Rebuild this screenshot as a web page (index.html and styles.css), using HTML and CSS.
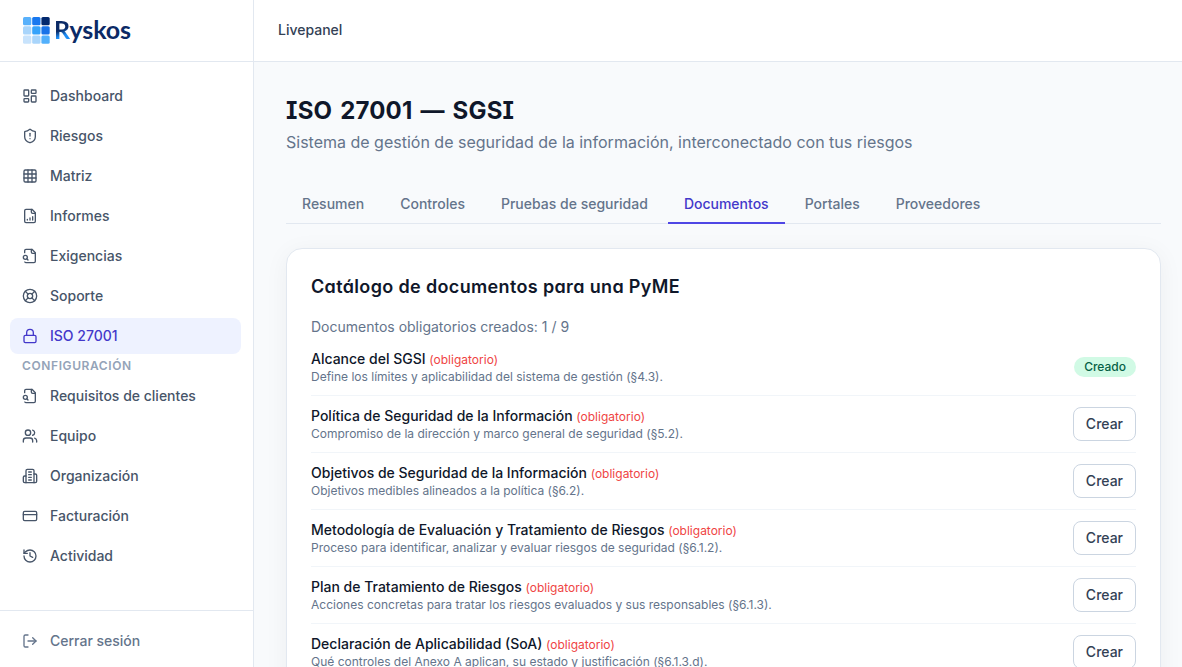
FILE: index.html
```
<!DOCTYPE html>
<html lang="es">
<head>
    <meta charset="UTF-8">
    <meta name="viewport" content="width=device-width, initial-scale=1.0">
    <title>Ryskos - ISO 27001</title>
    <link rel="stylesheet" href="styles.css">
</head>
<body>
    <div class="app">
        <aside class="sidebar">
            <a class="brand" href="#">
                <svg class="brand-mark" viewBox="0 0 27 27">
                    <rect x="0" y="0" width="8.3" height="8.3" rx="1.5" fill="#59b1fb"/>
                    <rect x="9.2" y="0" width="8.3" height="8.3" rx="1.5" fill="#1878ef"/>
                    <rect x="18.4" y="0" width="8.3" height="8.3" rx="1.5" fill="#03296e"/>
                    <rect x="0" y="9.2" width="8.3" height="8.3" rx="1.5" fill="#a9d5fb"/>
                    <rect x="9.2" y="9.2" width="8.3" height="8.3" rx="1.5" fill="#36a3fb"/>
                    <rect x="18.4" y="9.2" width="8.3" height="8.3" rx="1.5" fill="#1973e8"/>
                    <rect x="0" y="18.4" width="8.3" height="8.3" rx="1.5" fill="#c8e3fc"/>
                    <rect x="9.2" y="18.4" width="8.3" height="8.3" rx="1.5" fill="#a9d5fb"/>
                    <rect x="18.4" y="18.4" width="8.3" height="8.3" rx="1.5" fill="#52b0fc"/>
                </svg>
                <span class="brand-name"><span class="brand-initial">R</span>yskos</span>
            </a>

            <nav class="nav">
                <a class="nav-link" href="#">
                    <svg class="icon" viewBox="0 0 24 24"><rect x="3" y="3" width="7" height="9" rx="1"/><rect x="14" y="3" width="7" height="5" rx="1"/><rect x="14" y="12" width="7" height="9" rx="1"/><rect x="3" y="16" width="7" height="5" rx="1"/></svg>
                    Dashboard
                </a>
                <a class="nav-link" href="#">
                    <svg class="icon" viewBox="0 0 24 24"><path d="M20 13c0 5-3.5 7.5-7.66 8.95a1 1 0 0 1-.67-.01C7.5 20.5 4 18 4 13V6a1 1 0 0 1 1-1c2 0 4.5-1.2 6.24-2.72a1.17 1.17 0 0 1 1.52 0C14.51 3.81 17 5 19 5a1 1 0 0 1 1 1z"/><path d="M12 8v4"/><path d="M12 16h.01"/></svg>
                    Riesgos
                </a>
                <a class="nav-link" href="#">
                    <svg class="icon" viewBox="0 0 24 24"><rect x="3" y="3" width="18" height="18" rx="2"/><path d="M3 9h18"/><path d="M3 15h18"/><path d="M9 3v18"/><path d="M15 3v18"/></svg>
                    Matriz
                </a>
                <a class="nav-link" href="#">
                    <svg class="icon" viewBox="0 0 24 24"><path d="M15 2H6a2 2 0 0 0-2 2v16a2 2 0 0 0 2 2h12a2 2 0 0 0 2-2V7Z"/><path d="M14 2v4a2 2 0 0 0 2 2h4"/><path d="M8 18v-1"/><path d="M12 18v-3"/><path d="M16 18v-5"/></svg>
                    Informes
                </a>
                <a class="nav-link" href="#">
                    <svg class="icon" viewBox="0 0 24 24"><path d="M14 2v4a2 2 0 0 0 2 2h4"/><path d="M4.268 21a2 2 0 0 0 1.727 1H18a2 2 0 0 0 2-2V7l-5-5H6a2 2 0 0 0-2 2v3"/><path d="m9 18-1.5-1.5"/><circle cx="5" cy="14" r="3"/></svg>
                    Exigencias
                </a>
                <a class="nav-link" href="#">
                    <svg class="icon" viewBox="0 0 24 24"><circle cx="12" cy="12" r="10"/><path d="m4.93 4.93 4.24 4.24"/><path d="m14.83 9.17 4.24-4.24"/><path d="m14.83 14.83 4.24 4.24"/><path d="m9.17 14.83-4.24 4.24"/><circle cx="12" cy="12" r="4"/></svg>
                    Soporte
                </a>
                <a class="nav-link active" href="#">
                    <svg class="icon" viewBox="0 0 24 24"><rect x="3" y="11" width="18" height="11" rx="2"/><path d="M7 11V7a5 5 0 0 1 10 0v4"/></svg>
                    ISO 27001
                </a>
                <p class="nav-heading">Configuración</p>
                <a class="nav-link" href="#">
                    <svg class="icon" viewBox="0 0 24 24"><path d="M14 2v4a2 2 0 0 0 2 2h4"/><path d="M4.268 21a2 2 0 0 0 1.727 1H18a2 2 0 0 0 2-2V7l-5-5H6a2 2 0 0 0-2 2v3"/><path d="m9 18-1.5-1.5"/><circle cx="5" cy="14" r="3"/></svg>
                    Requisitos de clientes
                </a>
                <a class="nav-link" href="#">
                    <svg class="icon" viewBox="0 0 24 24"><path d="M16 21v-2a4 4 0 0 0-4-4H6a4 4 0 0 0-4 4v2"/><circle cx="9" cy="7" r="4"/><path d="M22 21v-2a4 4 0 0 0-3-3.87"/><path d="M16 3.13a4 4 0 0 1 0 7.75"/></svg>
                    Equipo
                </a>
                <a class="nav-link" href="#">
                    <svg class="icon" viewBox="0 0 24 24"><path d="M6 22V4a2 2 0 0 1 2-2h8a2 2 0 0 1 2 2v18Z"/><path d="M6 12H4a2 2 0 0 0-2 2v6a2 2 0 0 0 2 2h2"/><path d="M18 9h2a2 2 0 0 1 2 2v9a2 2 0 0 1-2 2h-2"/><path d="M10 6h4"/><path d="M10 10h4"/><path d="M10 14h4"/><path d="M10 18h4"/></svg>
                    Organización
                </a>
                <a class="nav-link" href="#">
                    <svg class="icon" viewBox="0 0 24 24"><rect x="2" y="5" width="20" height="14" rx="2"/><path d="M2 10h20"/></svg>
                    Facturación
                </a>
                <a class="nav-link" href="#">
                    <svg class="icon" viewBox="0 0 24 24"><path d="M3 12a9 9 0 1 0 9-9 9.75 9.75 0 0 0-6.74 2.74L3 8"/><path d="M3 3v5h5"/><path d="M12 7v5l4 2"/></svg>
                    Actividad
                </a>
            </nav>

            <div class="sidebar-footer">
                <a class="nav-link logout" href="#">
                    <svg class="icon" viewBox="0 0 24 24"><path d="M9 21H5a2 2 0 0 1-2-2V5a2 2 0 0 1 2-2h4"/><path d="m16 17 5-5-5-5"/><path d="M21 12H9"/></svg>
                    Cerrar sesión
                </a>
            </div>
        </aside>

        <div class="main">
            <header class="topbar">Livepanel</header>

            <main class="content">
                <h1>ISO 27001 — SGSI</h1>
                <p class="subtitle">Sistema de gestión de seguridad de la información, interconectado con tus riesgos</p>

                <div class="tabs">
                    <a class="tab" href="#">Resumen</a>
                    <a class="tab" href="#">Controles</a>
                    <a class="tab" href="#">Pruebas de seguridad</a>
                    <a class="tab active" href="#">Documentos</a>
                    <a class="tab" href="#">Portales</a>
                    <a class="tab" href="#">Proveedores</a>
                </div>

                <section class="card">
                    <h2>Catálogo de documentos para una PyME</h2>
                    <p class="summary">Documentos obligatorios creados: 1 / 9</p>

                    <ul class="doc-list">
                        <li class="doc">
                            <div>
                                <p class="doc-title">Alcance del SGSI <span class="required">(obligatorio)</span></p>
                                <p class="doc-text">Define los límites y aplicabilidad del sistema de gestión (§4.3).</p>
                            </div>
                            <span class="badge">Creado</span>
                        </li>
                        <li class="doc">
                            <div>
                                <p class="doc-title">Política de Seguridad de la Información <span class="required">(obligatorio)</span></p>
                                <p class="doc-text">Compromiso de la dirección y marco general de seguridad (§5.2).</p>
                            </div>
                            <button class="btn" type="button">Crear</button>
                        </li>
                        <li class="doc">
                            <div>
                                <p class="doc-title">Objetivos de Seguridad de la Información <span class="required">(obligatorio)</span></p>
                                <p class="doc-text">Objetivos medibles alineados a la política (§6.2).</p>
                            </div>
                            <button class="btn" type="button">Crear</button>
                        </li>
                        <li class="doc">
                            <div>
                                <p class="doc-title">Metodología de Evaluación y Tratamiento de Riesgos <span class="required">(obligatorio)</span></p>
                                <p class="doc-text">Proceso para identificar, analizar y evaluar riesgos de seguridad (§6.1.2).</p>
                            </div>
                            <button class="btn" type="button">Crear</button>
                        </li>
                        <li class="doc">
                            <div>
                                <p class="doc-title">Plan de Tratamiento de Riesgos <span class="required">(obligatorio)</span></p>
                                <p class="doc-text">Acciones concretas para tratar los riesgos evaluados y sus responsables (§6.1.3).</p>
                            </div>
                            <button class="btn" type="button">Crear</button>
                        </li>
                        <li class="doc">
                            <div>
                                <p class="doc-title">Declaración de Aplicabilidad (SoA) <span class="required">(obligatorio)</span></p>
                                <p class="doc-text">Qué controles del Anexo A aplican, su estado y justificación (§6.1.3.d).</p>
                            </div>
                            <button class="btn" type="button">Crear</button>
                        </li>
                    </ul>
                </section>
            </main>
        </div>
    </div>
</body>
</html>
```
FILE: styles.css
```
* {
    box-sizing: border-box;
    margin: 0;
    padding: 0;
}

body {
    font-family: 'Inter', sans-serif;
    font-size: 14px;
    line-height: 20px;
    color: #0f172a;
    background: #f8fafc;
}

a {
    color: inherit;
    text-decoration: none;
}

.app {
    display: flex;
    height: 100vh;
    overflow: hidden;
}

/* Sidebar */
.sidebar {
    display: flex;
    flex-direction: column;
    flex: none;
    width: 254px;
    background: #fff;
    border-right: 1px solid #e2e8f0;
}

.brand {
    display: flex;
    align-items: center;
    gap: 4px;
    flex: none;
    height: 62px;
    padding: 0 22px 1px 23px;
    border-bottom: 1px solid #e2e8f0;
}

.brand-mark {
    width: 27px;
    height: 27px;
}

.brand-name {
    padding-bottom: 2px;
    font-family: 'Lato', sans-serif;
    font-size: 25px;
    font-weight: 700;
    line-height: 30px;
    letter-spacing: -0.1px;
    color: #0b2a66;
}

.brand-initial {
    background: linear-gradient(160deg, #0b2a66 52%, #1d8df5 70%);
    -webkit-background-clip: text;
    background-clip: text;
    color: transparent;
}

.nav {
    flex: 1;
    display: flex;
    flex-direction: column;
    gap: 4px;
    padding: 16px 12px 0 10px;
}

.nav-link {
    display: flex;
    align-items: center;
    gap: 12px;
    height: 36px;
    padding: 0 12px;
    border-radius: 8px;
    font-size: 14px;
    font-weight: 500;
    color: #475569;
}

.nav-link.active {
    background: #eef2ff;
    color: #4338ca;
}

.nav-heading {
    height: 16px;
    padding: 0 12px;
    font-size: 12px;
    font-weight: 600;
    line-height: 16px;
    letter-spacing: 0.6px;
    text-transform: uppercase;
    color: #94a3b8;
}

.icon {
    flex: none;
    width: 16px;
    height: 16px;
    fill: none;
    stroke: currentColor;
    stroke-width: 2;
    stroke-linecap: round;
    stroke-linejoin: round;
}

.sidebar-footer {
    padding: 12px 12px 8px 10px;
    border-top: 1px solid #e2e8f0;
}

.nav-link.logout {
    color: #64748b;
}

/* Main column */
.main {
    flex: 1;
    min-width: 0;
}

.topbar {
    height: 62px;
    padding: 20px 24px;
    font-weight: 500;
    color: #334155;
    background: #fff;
    border-bottom: 1px solid #e2e8f0;
}

.content {
    padding: 33px 21px 32px 32px;
}

/* serifed I and single-storey a for the headings */
h1,
h2 {
    font-feature-settings: 'cv08', 'cv11';
}

h1 {
    font-size: 24px;
    font-weight: 700;
    line-height: 32px;
    letter-spacing: 0.2px;
    word-spacing: 2px;
}

.subtitle {
    margin-top: 3px;
    font-size: 16px;
    line-height: 24px;
    color: #64748b;
}

.tabs {
    display: flex;
    gap: 4px;
    margin-top: 32px;
    border-bottom: 1px solid #e2e8f0;
}

.tab {
    margin-bottom: -1px;
    padding: 8px 16px;
    border-bottom: 2px solid transparent;
    font-weight: 500;
    color: #64748b;
}

.tab.active {
    color: #4338ca;
    border-bottom-color: #4f46e5;
}

/* Documents card */
.card {
    margin-top: 24px;
    padding: 24px;
    background: #fff;
    border: 1px solid #e2e8f0;
    border-radius: 16px;
    box-shadow: 0 4px 24px rgba(15, 23, 42, 0.05);
}

h2 {
    font-size: 18px;
    font-weight: 600;
    line-height: 28px;
    letter-spacing: 0.35px;
}

.summary {
    margin-top: 16px;
    color: #64748b;
}

.doc-list {
    margin-top: 2px;
    list-style: none;
}

.doc {
    display: flex;
    align-items: center;
    justify-content: space-between;
    height: 57px;
    border-bottom: 1px solid #f1f5f9;
}

.doc-title {
    font-weight: 500;
    line-height: 18px;
}

.required {
    font-size: 12px;
    font-weight: 400;
    color: #ef4444;
}

.doc-text {
    font-size: 12px;
    line-height: 16px;
    color: #64748b;
}

.badge {
    padding: 2px 10px;
    border-radius: 10px;
    font-size: 12px;
    font-weight: 500;
    line-height: 16px;
    color: #065f46;
    background: #d1fae5;
}

.btn {
    height: 34px;
    padding: 0 12px 2px;
    border: 1px solid #cbd5e1;
    border-radius: 8px;
    font-family: inherit;
    font-size: 14px;
    font-weight: 500;
    color: #334155;
    background: #fff;
}
```
